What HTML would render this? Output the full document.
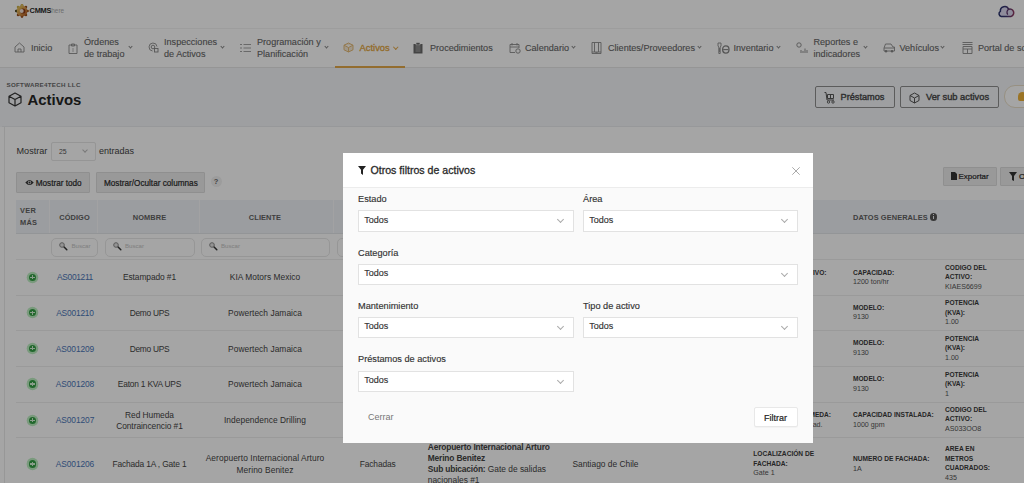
<!DOCTYPE html>
<html><head><meta charset="utf-8">
<style>
*{box-sizing:border-box}
html,body{margin:0;padding:0}
body{width:1024px;height:483px;overflow:hidden;position:relative;background:#fff;font-family:"Liberation Sans",sans-serif;color:#333}
.a{position:absolute;white-space:nowrap}
svg{position:absolute;overflow:visible}
/* nav */
.nt{position:absolute;font-size:9.1px;color:#666;line-height:12px;white-space:nowrap;-webkit-text-stroke:.12px #666}
.chev{position:absolute;width:3px;height:3px;border-right:1px solid #888;border-bottom:1px solid #888;transform:rotate(45deg)}
.hbtn{position:absolute;border:1px solid #8f8f8f;border-radius:2px;background:transparent;height:22px;font-size:9.2px;color:#4a4a4a;-webkit-text-stroke:.4px #4a4a4a}
.gbtn{position:absolute;background:#ececec;border:1px solid #dedede;border-radius:1px;font-size:8.2px;color:#2a2a2a;height:21px;-webkit-text-stroke:.2px #2a2a2a}
.th{position:absolute;font-size:7.4px;font-weight:bold;color:#626262;letter-spacing:.1px;text-align:center}
.srch{position:absolute;top:237.5px;height:19px;border:1px solid #e8e8e8;border-radius:5px;background:#fff}
.srch span{position:absolute;left:19.5px;top:3.8px;font-size:6.1px;color:#c4c4c4}
.rb{position:absolute;left:16px;width:1008px;height:1px;background:#eeeeee}
.td{position:absolute;font-size:8.3px;color:#444;text-align:center;line-height:11.4px}
.plus{position:absolute;left:28.8px;width:7.4px;height:7.4px;border-radius:50%;background:#35a046;box-shadow:0 0 0 2.3px #bdeec1}
.plus:before{content:"";position:absolute;left:1.6px;top:3.1px;width:4.2px;height:1.2px;background:#d4f3d6}
.plus:after{content:"";position:absolute;left:3.1px;top:1.6px;width:1.2px;height:4.2px;background:#d4f3d6}
.code{position:absolute;font-size:8.05px;color:#4a76b8;left:49px;width:52px;text-align:center}
.lb{position:absolute;font-size:6.6px;font-weight:bold;color:#3a3a3a;line-height:9.6px}
.lv{font-weight:normal;color:#555;font-size:7.1px}
/* modal */
.ml{position:absolute;font-size:9.2px;color:#333;-webkit-text-stroke:.15px #333}
.sel{position:absolute;height:21.5px;background:#fff;border:1px solid #e2e2e2}
.sel span{position:absolute;left:5.2px;top:3.5px;font-size:9px;color:#333;-webkit-text-stroke:.15px #333}
.sel i{position:absolute;right:10px;top:6px;width:5px;height:5px;border-right:1px solid #aaa;border-bottom:1px solid #aaa;transform:rotate(45deg)}
</style></head><body>

<!-- TOP BAR -->
<div class="a" style="left:0;top:0;width:1024px;height:29px;background:#fff;border-bottom:1px solid #f3f3f3"></div>

<!-- NAV -->
<div class="a" style="left:0;top:29px;width:1024px;height:39px;background:#fff;border-bottom:1px solid #e6e6e6"></div>

<!-- logo -->
<svg style="left:14.5px;top:4px" width="14" height="14" viewBox="0 0 14 14">
  <defs><linearGradient id="gg" x1="0" y1="0" x2="1" y2="1"><stop offset="0" stop-color="#e8d060"/><stop offset=".45" stop-color="#d8a050"/><stop offset="1" stop-color="#b0501c"/></linearGradient></defs>
  <g transform="translate(7 7)">
    <g fill="url(#gg)">
      <circle r="5.3"/>
    </g>
    <g fill="#9a5020">
      <circle cx="0" cy="-5.6" r="1.3"/><circle cx="0" cy="5.6" r="1.3"/><circle cx="-5.6" cy="0" r="1.3"/><circle cx="5.6" cy="0" r="1.3"/>
      <circle cx="3.96" cy="3.96" r="1.3"/><circle cx="-3.96" cy="3.96" r="1.3"/><circle cx="3.96" cy="-3.96" r="1.3"/>
    </g>
    <circle cx="-3.96" cy="-3.96" r="1.3" fill="#c8b050"/>
    <circle cx="-5.6" cy="0" r="1.3" fill="#3a4020"/>
    <circle cx="0" cy="-5.6" r="1.3" fill="#d8c060"/>
    <circle r="5.3" fill="url(#gg)"/>
    <circle cx=".8" cy="0" r="2.6" fill="#8a3a18"/>
    <circle cx="-.3" cy="0" r="2" fill="#f4e4d8"/>
  </g>
</svg>
<div class="a" style="left:29.5px;top:6px;font-size:7.4px;font-weight:bold;color:#2a2a2a;letter-spacing:-.2px">CMMS<span style="font-weight:normal;color:#aaa;font-size:6.4px;letter-spacing:0">here</span></div>
<!-- cloud -->
<svg style="left:996.5px;top:5px" width="19" height="13" viewBox="0 0 19 13">
  <defs><linearGradient id="cg" x1="0" y1="0" x2="1" y2="0"><stop offset="0" stop-color="#262f6a"/><stop offset=".5" stop-color="#3a3570"/><stop offset="1" stop-color="#8e3a62"/></linearGradient></defs>
  <path d="M4.2 11.4 A2.7 2.7 0 0 1 3.4 6.4 A4.3 4.3 0 0 1 11.6 4.2 A3.7 3.7 0 1 1 14.2 11.4 Z" fill="#dcd8f0" stroke="url(#cg)" stroke-width="1.5" stroke-linejoin="round"/>
  <path d="M11.6 4.2 A3.7 3.7 0 0 0 10.8 9.6" fill="none" stroke="#5a3468" stroke-width="1.3"/>
</svg>

<!-- nav items -->
<svg style="left:14px;top:42px" width="11" height="11" viewBox="0 0 11 11"><path d="M1 5 L5.5 1 L10 5 V10 H1Z M4 10 V7 H7 V10" fill="none" stroke="#8a8a8a" stroke-width=".9"/></svg>
<div class="nt" style="left:31px;top:42px">Inicio</div>

<svg style="left:68px;top:43px" width="10" height="11" viewBox="0 0 10 11"><path d="M1 2 H9 V10.5 H1Z M3.5 1 H6.5 V3 H3.5Z" fill="none" stroke="#8a8a8a" stroke-width=".9"/><path d="M4 6 H6 M4 8 H6" stroke="#999" stroke-width=".7"/></svg>
<div class="nt" style="left:84px;top:36px">Órdenes<br>de trabajo</div>
<div class="chev" style="left:128.5px;top:44.5px"></div>

<svg style="left:148px;top:42px" width="11" height="11" viewBox="0 0 11 11"><path d="M9 4.5 A4 4 0 1 0 4.5 9" fill="none" stroke="#8a8a8a" stroke-width=".9"/><circle cx="5" cy="5" r="1.8" fill="none" stroke="#858585" stroke-width=".9"/><rect x="6.5" y="6.5" width="3.5" height="3.5" fill="none" stroke="#858585" stroke-width=".9"/></svg>
<div class="nt" style="left:164px;top:36px">Inspecciones<br>de Activos</div>
<div class="chev" style="left:220.5px;top:44.5px"></div>

<svg style="left:240px;top:43px" width="11" height="10" viewBox="0 0 11 10"><path d="M0 1.5 H2 M3.5 1.5 H11 M0 5 H2 M3.5 5 H11 M0 8.5 H2 M3.5 8.5 H11" stroke="#999" stroke-width=".9"/></svg>
<div class="nt" style="left:257px;top:36px">Programación y<br>Planificación</div>
<div class="chev" style="left:324.5px;top:44.5px"></div>

<!-- active -->
<svg style="left:343px;top:42px" width="11" height="11" viewBox="0 0 11 11"><path d="M5.5 1 L10 3.2 V7.8 L5.5 10 L1 7.8 V3.2Z M1 3.2 L5.5 5.5 L10 3.2 M5.5 5.5 V10" fill="#f6ead6" stroke="#e5bb78" stroke-width="1" stroke-linejoin="round"/></svg>
<div class="nt" style="left:359.5px;top:42px;color:#e3a640;font-size:9.4px;-webkit-text-stroke:.3px #e3a640">Activos</div>
<div class="chev" style="left:394px;top:45px;border-color:#e3a94a;width:3.5px;height:3.5px"></div>
<div class="a" style="left:335px;top:66px;width:70px;height:2px;background:#e3a94a"></div>

<svg style="left:412.5px;top:41.5px" width="10" height="12" viewBox="0 0 10 12"><path d="M0.5 2 H9.5 V11.5 H0.5Z" fill="#6a6a6a"/><rect x="3" y="0.5" width="4" height="2.5" fill="#6a6a6a" stroke="#fff" stroke-width=".6"/><path d="M2.5 5 H7.5 M2.5 7 H7.5 M2.5 9 H7.5" stroke="#ddd" stroke-width=".6"/></svg>
<div class="nt" style="left:430px;top:42px">Procedimientos</div>

<svg style="left:508.5px;top:42px" width="12" height="12" viewBox="0 0 12 12"><path d="M1 2.5 H10 V6 M6 10.5 H1 V2.5 M1 5 H10 M3 1 V3.5 M8 1 V3.5" fill="none" stroke="#8a8a8a" stroke-width=".9"/><circle cx="9" cy="9" r="2.2" fill="none" stroke="#858585" stroke-width=".9"/></svg>
<div class="nt" style="left:525px;top:42px">Calendario</div>
<div class="chev" style="left:571.5px;top:44.5px"></div>

<svg style="left:591px;top:41.5px" width="11" height="12" viewBox="0 0 11 12"><path d="M1 0.5 H10 V11.5 H1Z M1 10 H10 M3.5 0.5 V10 M7.5 0.5 V10 M5 11.5 V10 M6 11.5 V10" fill="none" stroke="#8a8a8a" stroke-width=".9"/></svg>
<div class="nt" style="left:608px;top:42px">Clientes/Proveedores</div>
<div class="chev" style="left:697.5px;top:44.5px"></div>

<svg style="left:716px;top:41.5px" width="14" height="13" viewBox="0 0 14 13"><path d="M2 1 H5 V4 L4.2 5 V11.5 H2.8 V5 L2 4Z" fill="none" stroke="#8a8a8a" stroke-width=".9"/><path d="M3.5 6 V10" stroke="#858585" stroke-width=".8"/><ellipse cx="9.8" cy="7.5" rx="3.2" ry="3.6" fill="none" stroke="#858585" stroke-width="1.3"/><path d="M7.2 7.6 H12.4" stroke="#858585" stroke-width="1.1"/></svg>
<div class="nt" style="left:733.5px;top:42px">Inventario</div>
<div class="chev" style="left:777px;top:44.5px"></div>

<svg style="left:796px;top:42px" width="12" height="12" viewBox="0 0 12 12"><circle cx="3" cy="3" r="2.2" fill="none" stroke="#858585" stroke-width=".9"/><path d="M5 8 V11 M7 9 V11 M9 6.5 V11 M11 8 V11" stroke="#858585" stroke-width=".9"/></svg>
<div class="nt" style="left:813.5px;top:36px">Reportes e<br>indicadores</div>
<div class="chev" style="left:864px;top:44.5px"></div>

<svg style="left:882.5px;top:42.5px" width="12" height="10" viewBox="0 0 12 10"><path d="M1 5 L2.5 1 H8 L10 4 H11.5 V8 H1Z M1 5 H11" fill="none" stroke="#8a8a8a" stroke-width=".9"/><circle cx="3" cy="8.2" r="1.2" fill="#858585"/><circle cx="9" cy="8.2" r="1.2" fill="#858585"/></svg>
<div class="nt" style="left:899.5px;top:42px">Vehículos</div>
<div class="chev" style="left:941px;top:44.5px"></div>

<svg style="left:961.5px;top:42px" width="11" height="12" viewBox="0 0 11 12"><path d="M0.5 0.5 H10.5 M0.5 2.5 H10.5 M1 4.5 H10 V11.5 H1Z M1 7 H10 M5.5 7 V11.5" fill="none" stroke="#8a8a8a" stroke-width=".9"/></svg>
<div class="nt" style="left:978px;top:42px">Portal de so</div>

<!-- PAGE HEADER -->
<div class="a" style="left:0;top:68px;width:1024px;height:59px;background:#f4f6f9"></div>

<div class="a" style="left:6.5px;top:80.8px;font-size:6.2px;font-weight:bold;color:#6a6a6a;letter-spacing:.3px">SOFTWARE4TECH LLC</div>
<svg style="left:8px;top:92px" width="14" height="15" viewBox="0 0 14 15"><path d="M7 1 L13 4.2 V10.8 L7 14 L1 10.8 V4.2Z M1 4.2 L7 7.5 L13 4.2 M7 7.5 V14" fill="none" stroke="#333" stroke-width="1.2" stroke-linejoin="round"/></svg>
<div class="a" style="left:27.5px;top:91.5px;font-size:14.9px;font-weight:bold;color:#262626">Activos</div>

<div class="hbtn" style="left:815px;top:86px;width:79.5px">
  <svg style="left:8px;top:4.5px" width="11" height="12" viewBox="0 0 11 12"><path d="M0.5 0.5 H2 L3 8 H10 M3.5 2.5 H9.5 V6.5 H3.5Z M6.5 2.5 V6.5" fill="none" stroke="#555" stroke-width="1"/><circle cx="4.5" cy="10" r="1.2" fill="none" stroke="#555" stroke-width=".9"/><circle cx="9" cy="10" r="1.2" fill="none" stroke="#555" stroke-width=".9"/></svg>
  <span class="a" style="left:24.5px;top:5px">Préstamos</span>
</div>
<div class="hbtn" style="left:899.5px;top:86px;width:99px">
  <svg style="left:8.5px;top:4.5px" width="11" height="12" viewBox="0 0 11 12"><path d="M5.5 1 L10 3.5 V8.5 L5.5 11 L1 8.5 V3.5Z M1 3.5 L5.5 6 L10 3.5 M5.5 6 V11" fill="none" stroke="#555" stroke-width="1" stroke-linejoin="round"/></svg>
  <span class="a" style="left:25.5px;top:5px;font-size:9.3px">Ver sub activos</span>
</div>
<div class="a" style="left:1003.5px;top:85px;width:50px;height:22.5px;border-radius:11px;border:1.2px solid #eadfc9;background:#fff">
  <div class="a" style="left:13px;top:6px;width:9px;height:9px;background:#f0b43a;border-radius:50% 50% 2px 2px"></div>
</div>

<!-- CARD -->
<div class="a" style="left:2px;top:126px;width:1022px;height:357px;background:#fff;border-top:1px solid #e9ebee"></div>
<div class="a" style="left:4px;top:127px;width:1px;height:356px;background:#e9e9e9"></div>

<div class="a" style="left:16.5px;top:145.5px;font-size:9.1px;color:#444">Mostrar</div>
<div class="a" style="left:50.5px;top:141.5px;width:45.5px;height:19px;border:1px solid #e6e6e6;border-radius:2px;background:#fff">
  <span class="a" style="left:7.5px;top:5px;font-size:6.9px;color:#555">25</span>
  <i class="a" style="left:31px;top:5px;width:4px;height:4px;border-right:1px solid #bbb;border-bottom:1px solid #bbb;transform:rotate(45deg)"></i>
</div>
<div class="a" style="left:99px;top:145.5px;font-size:9px;color:#444">entradas</div>

<div class="gbtn" style="left:16px;top:172px;width:74px">
  <svg style="left:8px;top:6px" width="9" height="7" viewBox="0 0 9 7"><path d="M0.3 3.5 Q4.5 -1.5 8.7 3.5 Q4.5 8.5 0.3 3.5Z" fill="#333"/><circle cx="4.5" cy="3.5" r="1.7" fill="#eaeaea"/><circle cx="4.5" cy="3.5" r="1" fill="#333"/></svg>
  <span class="a" style="left:18.7px;top:5.5px">Mostrar todo</span>
</div>
<div class="gbtn" style="left:95.5px;top:172px;width:109px">
  <span class="a" style="left:7.5px;top:5.5px">Mostrar/Ocultar columnas</span>
</div>
<div class="a" style="left:210.5px;top:176px;width:11px;height:11px;border-radius:50%;background:#f2f2f2;font-size:7.5px;font-weight:bold;color:#666;text-align:center;line-height:11px">?</div>

<div class="gbtn" style="left:942.5px;top:166.5px;width:54px;height:19.5px">
  <svg style="left:7px;top:4.5px" width="6" height="8" viewBox="0 0 6 8"><path d="M0 0 H4 L6 2 V8 H0Z" fill="#333"/></svg>
  <span class="a" style="left:15px;top:4.5px;font-size:8px">Exportar</span>
</div>
<div class="gbtn" style="left:999.5px;top:166.5px;width:60px;height:19.5px">
  <svg style="left:8.5px;top:4.5px" width="8" height="9" viewBox="0 0 8 9"><path d="M0 0 H8 L5 4 V9 L3 8 V4Z" fill="#333"/></svg>
  <span class="a" style="left:18.5px;top:4.5px;font-size:8px">Otros</span>
</div>

<!-- table header -->
<div class="a" style="left:16px;top:200px;width:1008px;height:33.5px;background:#f0f3f7;border-bottom:1px solid #e4e6ea"></div>
<div class="a" style="left:48.5px;top:200px;width:1px;height:33px;background:#fafbfc"></div>
<div class="a" style="left:97px;top:200px;width:1px;height:33px;background:#fafbfc"></div>
<div class="a" style="left:198.5px;top:200px;width:1px;height:33px;background:#fafbfc"></div>
<div class="a" style="left:333px;top:200px;width:1px;height:33px;background:#fafbfc"></div>
<div class="th" style="left:20px;top:205px;text-align:left;line-height:12.3px;letter-spacing:.3px">VER<br>MÁS</div>
<div class="th" style="left:49px;top:212.5px;width:51px">CÓDIGO</div>
<div class="th" style="left:99px;top:212.5px;width:101px">NOMBRE</div>
<div class="th" style="left:198px;top:212.5px;width:134px">CLIENTE</div>
<div class="th" style="left:853px;top:212.5px;text-align:left">DATOS GENERALES</div>
<div class="a" style="left:929.5px;top:213px;width:7.5px;height:7.5px;border-radius:50%;background:#555"></div>
<div class="a" style="left:932.7px;top:216px;width:1.2px;height:3px;background:#eef1f5"></div>
<div class="a" style="left:932.7px;top:214.3px;width:1.2px;height:1.1px;background:#eef1f5"></div>

<!-- search row -->
<div class="srch" style="left:51px;width:46.5px"><svg style="left:7.3px;top:3.6px" width="9" height="9" viewBox="0 0 9 9"><path d="M4.3 4.3 L7.8 7.8" stroke="#333" stroke-width="1.5" stroke-linecap="round"/><circle cx="3" cy="3" r="2.3" fill="#e4e4e4" stroke="#8a8a8a" stroke-width="1"/></svg><span>Buscar</span></div>
<div class="srch" style="left:104.5px;width:90px"><svg style="left:7.3px;top:3.6px" width="9" height="9" viewBox="0 0 9 9"><path d="M4.3 4.3 L7.8 7.8" stroke="#333" stroke-width="1.5" stroke-linecap="round"/><circle cx="3" cy="3" r="2.3" fill="#e4e4e4" stroke="#8a8a8a" stroke-width="1"/></svg><span>Buscar</span></div>
<div class="srch" style="left:200.5px;width:129.5px"><svg style="left:7.3px;top:3.6px" width="9" height="9" viewBox="0 0 9 9"><path d="M4.3 4.3 L7.8 7.8" stroke="#333" stroke-width="1.5" stroke-linecap="round"/><circle cx="3" cy="3" r="2.3" fill="#e4e4e4" stroke="#8a8a8a" stroke-width="1"/></svg><span>Buscar</span></div>
<div class="srch" style="left:336.5px;width:80px"></div>

<!-- rows -->
<div class="rb" style="top:259px"></div>
<div class="rb" style="top:294.5px"></div>
<div class="rb" style="top:330px"></div>
<div class="rb" style="top:365.8px"></div>
<div class="rb" style="top:401.5px"></div>
<div class="rb" style="top:437.2px"></div>
<div class="plus" style="top:273.6px"></div>
<div class="td" style="left:-5px;width:160px;top:272.4px;font-size:8.4px;line-height:11.4px;color:#4a76b8;letter-spacing:-0.33px">AS001211</div>
<div class="td" style="left:69.5px;width:160px;top:272.4px;font-size:8.4px;line-height:11.4px;letter-spacing:-0.09px">Estampado #1</div>
<div class="td" style="left:185px;width:160px;top:272.4px;font-size:8.4px;line-height:11.4px;letter-spacing:0.04px">KIA Motors Mexico</div>
<div class="plus" style="top:309.1px"></div>
<div class="td" style="left:-5px;width:160px;top:307.9px;font-size:8.4px;line-height:11.4px;color:#4a76b8;letter-spacing:-0.2px">AS001210</div>
<div class="td" style="left:69.5px;width:160px;top:307.9px;font-size:8.4px;line-height:11.4px;letter-spacing:-0.27px">Demo UPS</div>
<div class="td" style="left:185px;width:160px;top:307.9px;font-size:8.4px;line-height:11.4px;letter-spacing:0.05px">Powertech Jamaica</div>
<div class="plus" style="top:344.7px"></div>
<div class="td" style="left:-5px;width:160px;top:343.5px;font-size:8.4px;line-height:11.4px;color:#4a76b8;letter-spacing:-0.1px">AS001209</div>
<div class="td" style="left:69.5px;width:160px;top:343.5px;font-size:8.4px;line-height:11.4px;letter-spacing:-0.27px">Demo UPS</div>
<div class="td" style="left:185px;width:160px;top:343.5px;font-size:8.4px;line-height:11.4px;letter-spacing:0.05px">Powertech Jamaica</div>
<div class="plus" style="top:380.3px"></div>
<div class="td" style="left:-5px;width:160px;top:379.1px;font-size:8.4px;line-height:11.4px;color:#4a76b8;letter-spacing:-0.1px">AS001208</div>
<div class="td" style="left:69.5px;width:160px;top:379.1px;font-size:8.4px;line-height:11.4px;letter-spacing:-0.21px">Eaton 1 KVA UPS</div>
<div class="td" style="left:185px;width:160px;top:379.1px;font-size:8.4px;line-height:11.4px;letter-spacing:0.05px">Powertech Jamaica</div>
<div class="plus" style="top:416.5px"></div>
<div class="td" style="left:-5px;width:160px;top:415.3px;font-size:8.4px;line-height:11.4px;color:#4a76b8;letter-spacing:-0.08px">AS001207</div>
<div class="td" style="left:69.5px;width:160px;top:409.6px;font-size:8.4px;line-height:11.4px;letter-spacing:-0.05px">Red Humeda<br>Contraincencio #1</div>
<div class="td" style="left:185px;width:160px;top:415.3px;font-size:8.4px;line-height:11.4px;letter-spacing:0.05px">Independence Drilling</div>
<div class="plus" style="top:460.3px"></div>
<div class="td" style="left:-5px;width:160px;top:459.1px;font-size:8.4px;line-height:11.4px;color:#4a76b8;letter-spacing:-0.1px">AS001206</div>
<div class="td" style="left:69.5px;width:160px;top:459.1px;font-size:8.4px;line-height:11.4px;letter-spacing:-0.16px">Fachada 1A , Gate 1</div>
<div class="td" style="left:185px;width:160px;top:453.4px;font-size:8.4px;line-height:11.4px;letter-spacing:0.07px">Aeropuerto Internacional Arturo<br>Merino Benitez</div>
<div class="lb" style="left:770px;width:56.5px;text-align:right;top:267.5px">ACTIVO:<br><span class="lv">&nbsp;</span></div>
<div class="lb" style="left:853px;top:267.7px">CAPACIDAD:<br><span class="lv">1200 ton/hr</span></div>
<div class="lb" style="left:945px;top:262.5px">CODIGO DEL<br>ACTIVO:<br><span class="lv">KIAES6699</span></div>
<div class="lb" style="left:853px;top:302.8px">MODELO:<br><span class="lv">9130</span></div>
<div class="lb" style="left:945px;top:298.2px">POTENCIA<br>(KVA):<br><span class="lv">1.00</span></div>
<div class="lb" style="left:853px;top:338.4px">MODELO:<br><span class="lv">9130</span></div>
<div class="lb" style="left:945px;top:333.8px">POTENCIA<br>(KVA):<br><span class="lv">1.00</span></div>
<div class="lb" style="left:853px;top:374.4px">MODELO:<br><span class="lv">9130</span></div>
<div class="lb" style="left:945px;top:369.8px">POTENCIA<br>(KVA):<br><span class="lv">1</span></div>
<div class="lb" style="left:740px;width:91px;text-align:right;top:410.2px">RED HUMEDA:</div>
<div class="lb" style="left:700px;width:122.5px;text-align:right;top:419.8px"><span class="lv">Humedad.</span></div>
<div class="lb" style="left:853px;top:410.2px">CAPACIDAD INSTALADA:<br><span class="lv">1000 gpm</span></div>
<div class="lb" style="left:945px;top:404.9px">CODIGO DEL<br>ACTIVO:<br><span class="lv">AS033OO8</span></div>
<div class="td" style="left:297.7px;width:160px;top:459.1px;font-size:8.4px;line-height:11.4px;letter-spacing:-0.11px">Fachadas</div>
<div class="td" style="left:427.8px;top:441.5px;line-height:11.2px;text-align:left;font-size:8.4px"><b style="letter-spacing:-0.17px">Aeropuerto Internacional Arturo<br>Merino Benitez<br>Sub ubicación:</b> Gate de salidas<br>nacionales #1</div>
<div class="td" style="left:572.4px;top:459.4px;font-size:8.4px;line-height:11.4px;text-align:left;">Santiago de Chile</div>
<div class="lb" style="left:753.3px;top:449.2px">LOCALIZACIÓN DE<br>FACHADA:<br><span class="lv">Gate 1</span></div>
<div class="lb" style="left:853px;top:454.0px">NUMERO DE FACHADA:<br><span class="lv">1A</span></div>
<div class="lb" style="left:945px;top:444.2px">AREA EN<br>METROS<br>CUADRADOS:<br><span class="lv">435</span></div>

<!-- OVERLAY -->
<div class="a" style="left:0;top:0;width:1024px;height:483px;background:rgba(0,0,0,.353)"></div>

<!-- MODAL -->
<div class="a" style="left:343px;top:153px;width:470px;height:290px;background:#fafafa;overflow:hidden">
  <div class="a" style="left:0;top:0;width:470px;height:34.5px;background:#fff;border-bottom:1px solid #ececec"></div>
  <svg style="left:15px;top:12.5px" width="8" height="9" viewBox="0 0 8 9"><path d="M0 0 H8 L5 3.8 V9 L3 7.6 V3.8Z" fill="#222"/></svg>
  <div class="a" style="left:27.5px;top:10.5px;font-size:10.6px;color:#2a2a2a;-webkit-text-stroke:.3px #2a2a2a">Otros filtros de activos</div>
  <svg style="left:449px;top:14px" width="8" height="8" viewBox="0 0 8 8"><path d="M0.3 0.3 L7.7 7.7 M7.7 0.3 L0.3 7.7" stroke="#aaa" stroke-width="1"/></svg>

  <div class="ml" style="left:15px;top:41px">Estado</div>
  <div class="sel" style="left:15px;top:57px;width:215.5px"><span>Todos</span><i></i></div>
  <div class="ml" style="left:240px;top:41px">Área</div>
  <div class="sel" style="left:240px;top:57px;width:215px"><span>Todos</span><i></i></div>

  <div class="ml" style="left:15px;top:94.5px">Categoría</div>
  <div class="sel" style="left:15px;top:110.5px;width:440px"><span>Todos</span><i></i></div>

  <div class="ml" style="left:15px;top:148px">Mantenimiento</div>
  <div class="sel" style="left:15px;top:163.5px;width:215.5px"><span>Todos</span><i></i></div>
  <div class="ml" style="left:240px;top:148px">Tipo de activo</div>
  <div class="sel" style="left:240px;top:163.5px;width:215px"><span>Todos</span><i></i></div>

  <div class="ml" style="left:15px;top:201px">Préstamos de activos</div>
  <div class="sel" style="left:15px;top:217.5px;width:215.5px"><span>Todos</span><i></i></div>

  <div class="a" style="left:25px;top:259px;font-size:9px;color:#777">Cerrar</div>
  <div class="a" style="left:410.5px;top:253.5px;width:44px;height:20.5px;background:#fff;border:1px solid #e8e8e8;border-radius:2px;font-size:9px;color:#222;-webkit-text-stroke:.2px #222;text-align:center;line-height:20.5px;box-shadow:0 1px 1px rgba(0,0,0,.03)">Filtrar</div>
</div>

</body></html>
